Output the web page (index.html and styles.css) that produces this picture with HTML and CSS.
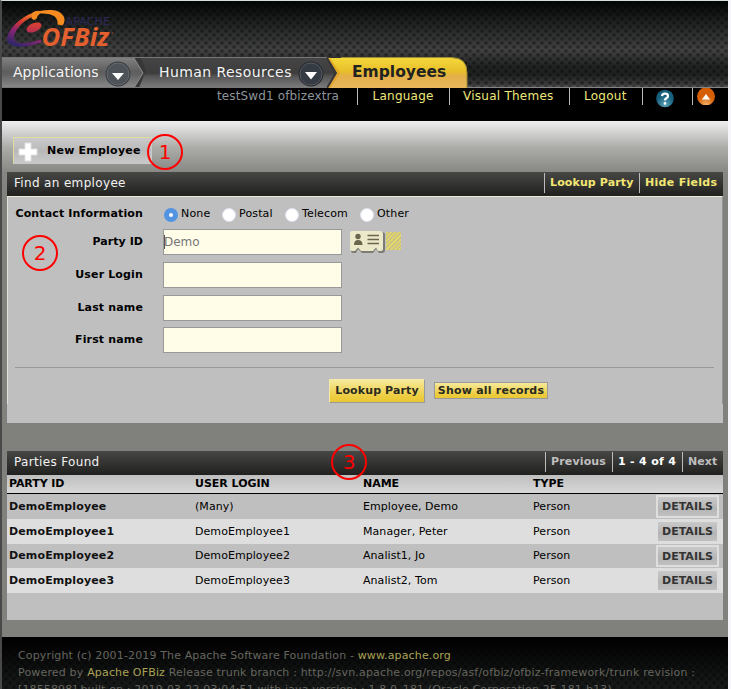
FILE: index.html
```html
<!DOCTYPE html>
<html lang="en">
<head>
<meta charset="utf-8">
<title>Employees</title>
<link rel="stylesheet" href="styles.css">
</head>
<body>
<div class="page">
  <header class="masthead">
    <svg class="logo" width="112" height="44" viewBox="0 0 112 44">
      <defs>
        <linearGradient id="swoosh" gradientUnits="userSpaceOnUse" x1="26" y1="6" x2="12" y2="38">
          <stop offset="0" stop-color="#ef7a25"/><stop offset=".3" stop-color="#d5382f"/><stop offset=".6" stop-color="#8a2573"/><stop offset="1" stop-color="#2b2766"/>
        </linearGradient>
        <linearGradient id="seed" x1="1" y1="0" x2="0" y2="1"><stop offset="0" stop-color="#e8472a"/><stop offset="1" stop-color="#a92a58"/></linearGradient>
      </defs>
      <path d="M27 4C16 7 1 20 1 31C2 39 18 40 35 33.500V30.500C22 35 9 36 8 29C8 21 17 12 26 8Z" fill="url(#swoosh)"/>
      <path d="M26 4Q30 1 34 2Q40 .5 46 1C56 2 60 8 58 14L56.500 16.500L51.500 15.500C52.500 8 47 4 34 4.500L31.500 7Q31 10.500 28 11L25.500 9.500Z" fill="#f38b20"/>
      <ellipse cx="28" cy="18.500" rx="8" ry="4.300" transform="rotate(-24 28 18.500)" fill="url(#seed)"/>
      <text class="logo-top" x="59.500" y="16" textLength="44.500">APACHE</text>
      <text class="logo-name" x="35.500" y="36.500" textLength="67.500" lengthAdjust="spacingAndGlyphs">OFBiz</text>
      <circle cx="106.500" cy="24" r=".7" fill="#a04020"/>
    </svg>
    <nav class="tabs">
      <svg class="tab-shapes" width="466" height="31" viewBox="0 0 466 31">
        <defs>
          <linearGradient id="g1" x2="0" y2="1"><stop offset="0" stop-color="#808080"/><stop offset=".45" stop-color="#5e5e5e"/><stop offset=".55" stop-color="#626262"/><stop offset="1" stop-color="#8a8a8a"/></linearGradient>
          <linearGradient id="g2" x2="0" y2="1"><stop offset="0" stop-color="#454545"/><stop offset=".5" stop-color="#3d3d3d"/><stop offset=".62" stop-color="#565656"/><stop offset="1" stop-color="#7c7c7c"/></linearGradient>
          <linearGradient id="g3" x2="0" y2="1"><stop offset="0" stop-color="#f4d83a"/><stop offset=".45" stop-color="#e8be2b"/><stop offset=".6" stop-color="#e2af48"/><stop offset="1" stop-color="#e9b85d"/></linearGradient>
        </defs>
        <path d="M321 1H450Q465 1 465 16V31H321Z" fill="url(#g3)"/>
        <path d="M327 31L337 16L327 1" fill="none" stroke="#dd971c" stroke-width="2" opacity=".6"/>
        <path d="M339 .5H450Q465 .5 465 16V31" fill="none" stroke="#9d8a31"/>
        <path d="M130 1H325L334 16L325 31H130Z" fill="url(#g2)"/>
        <path d="M325 1L334 16L325 31" fill="none" stroke="#343434" stroke-width="2"/>
        <path d="M132 1L139 1L144 13L137 31H130Z" fill="#373737"/>
        <path d="M0 1H132L141 16L132 31H0Z" fill="url(#g1)"/>
        <path d="M132 1L141 16L132 31" fill="none" stroke="#8a8a8a"/>
        <path d="M0 .5H325M0 30.500H325" stroke="#777"/>
      </svg>
      <span class="tab tab-app">Applications</span>
      <svg class="drop" width="26" height="28" viewBox="0 0 26 28"><circle cx="13" cy="15" r="12.500" fill="#3a3d42"/><circle cx="13" cy="15" r="11" fill="#4d5359" stroke="#666b70"/><path d="M7 14H19L13 21Z" fill="#fff"/></svg>
      <span class="tab tab-hr">Human Resources</span>
      <svg class="drop" width="26" height="28" viewBox="0 0 26 28"><circle cx="13" cy="15" r="12.500" fill="#282c31"/><circle cx="13" cy="15" r="11" fill="#353b42" stroke="#575b60"/><path d="M7 13H19L13 20.500Z" fill="#fff"/></svg>
      <span class="tab tab-current">Employees</span>
    </nav>
  </header>
  <div class="prefs">
    <span class="pref user">testSwd1 ofbizextra</span>
    <a class="pref lang">Language</a>
    <a class="pref themes">Visual Themes</a>
    <a class="pref logout">Logout</a>
    <a class="pref help"><svg width="18" height="19" viewBox="0 0 18 19"><defs><radialGradient id="hg" cy=".85"><stop offset="0" stop-color="#5fa3b8"/><stop offset="1" stop-color="#17617f"/></radialGradient></defs><circle cx="9" cy="9.500" r="8.800" fill="url(#hg)"/><path d="M6 7.200Q6.200 4.700 9 4.700Q12 4.700 12 7Q12 8.500 10.200 9.300Q9 9.900 9 11.500" fill="none" stroke="#fff" stroke-width="2.200"/><circle cx="9" cy="14.400" r="1.300" fill="#fff"/></svg></a>
    <a class="pref up"><svg width="18" height="17" viewBox="0 0 18 17"><defs><radialGradient id="ug" cy=".95"><stop offset="0" stop-color="#f3b26b"/><stop offset="1" stop-color="#d65f06"/></radialGradient></defs><circle cx="9" cy="8.500" r="9" fill="url(#ug)"/><path d="M5 11.500L9 6L13 11.500Z" fill="#fff"/></svg></a>
  </div>
  <main class="content">
    <div class="actions">
      <a class="new-button"><svg width="20" height="20" viewBox="0 0 20 20"><path d="M7 1H13V7H19V13H13V19H7V13H1V7H7Z" fill="#fff" stroke="#e2e2e2"/></svg><span>New Employee</span></a>
    </div>
    <section class="panel find">
      <div class="bar"><h2>Find an employee</h2><div class="bar-links"><a class="w-lookup">Lookup Party</a><a class="w-hide">Hide Fields</a></div></div>
      <form class="fields">
        <div class="row first"><span class="label">Contact Information</span>
          <div class="radios">
            <span class="radio-item r1"><i class="radio on"></i>None</span>
            <span class="radio-item r2"><i class="radio"></i>Postal</span>
            <span class="radio-item r3"><i class="radio"></i>Telecom</span>
            <span class="radio-item"><i class="radio"></i>Other</span>
          </div>
        </div>
        <div class="row r-party"><span class="label">Party ID</span><div class="input">Demo</div>
          <svg class="card-icon" width="38" height="26" viewBox="0 0 38 26"><path d="M4 3H33Q36 3 36 6V21Q36 24 33 24H30L27 20L24 24H13L9 20L7 24H4Q2 24 2 21V6Q2 3 4 3Z" fill="#6d6c62" opacity=".8"/><path d="M3 2H31Q34 2 34 5V20Q34 22 32 22H29L27 18.500L24 22H12L9 18.500L6 22H3Q1 22 1 20V4Q1 2 3 2Z" fill="#ece9ca"/><circle cx="9" cy="7.500" r="2.700" fill="#69664d"/><path d="M5 16Q5 11 9 11Q13.500 11 13.500 16Z" fill="#69664d"/><path d="M18.500 6.500H30M18.500 10.500H30M18.500 14.500H30" stroke="#69664d" stroke-width="1.400"/></svg>
          <i class="hatch"></i></div>
        <div class="row"><span class="label">User Login</span><div class="input"></div></div>
        <div class="row"><span class="label">Last name</span><div class="input"></div></div>
        <div class="row"><span class="label">First name</span><div class="input"></div></div>
        <div class="submit"><span class="btn lookup">Lookup Party</span><span class="btn show">Show all records</span></div>
      </form>
    </section>
    <section class="panel results">
      <div class="bar"><h2>Parties Found</h2><div class="bar-links pager"><span class="w-prev">Previous</span><b class="w-count">1 - 4 of 4</b><span class="w-next">Next</span></div></div>
      <div class="tr head"><span>PARTY ID</span><span>USER LOGIN</span><span>NAME</span><span>TYPE</span></div>
      <div class="tr"><b>DemoEmployee</b><span>(Many)</span><span>Employee, Demo</span><span>Person</span><a class="details">DETAILS</a></div>
      <div class="tr alt"><b>DemoEmployee1</b><span>DemoEmployee1</span><span>Manager, Peter</span><span>Person</span><a class="details">DETAILS</a></div>
      <div class="tr short"><b>DemoEmployee2</b><span>DemoEmployee2</span><span>Analist1, Jo</span><span>Person</span><a class="details">DETAILS</a></div>
      <div class="tr alt"><b>DemoEmployee3</b><span>DemoEmployee3</span><span>Analist2, Tom</span><span>Person</span><a class="details">DETAILS</a></div>
    </section>
  </main>
  <footer class="footer">
    <div class="f1">Copyright (c) 2001-2019 The Apache Software Foundation - <a>www.apache.org</a></div>
    <div class="f2">Powered by <a>Apache OFBiz</a> Release trunk branch : http://svn.apache.org/repos/asf/ofbiz/ofbiz-framework/trunk revision :</div>
    <div class="f3">[1855898] built on : 2019-03-22 03:04:51 with java version: : 1.8.0_181 (Oracle Corporation 25.181-b13)</div>
  </footer>
  <span class="mark m1">1</span>
  <span class="mark m2">2</span>
  <span class="mark m3">3</span>
</div>
</body>
</html>
```
FILE: styles.css
```css
* { box-sizing: border-box; }
body { margin: 0; background: #f7f6fa; font: 11px/14px "DejaVu Sans", sans-serif; color: #000; overflow: hidden; }
.page { position: relative; width: 728px; height: 689px; border-left: 2px solid #494949; border-top: 1px solid #d4dedf; overflow: hidden; }

.masthead { height: 87px; display: flex; flex-direction: column; justify-content: space-between; border-bottom: 1px solid #858585;
  background:
    radial-gradient(circle at 4px 2px, rgba(0,0,0,.36) 1px, transparent 2.600px) 0 0 / 8px 8px,
    radial-gradient(circle at 4px 2px, rgba(0,0,0,.36) 1px, transparent 2.600px) 4px 4px / 8px 8px,
    linear-gradient(#030505, #272929 32%, #414141 57%, #1f2121 77%, #1f2121 86%, #3a3a3a 97%, #555); }
.logo { margin: 8px 0 0 4px; flex: none; }
.logo-top { font: 11px "DejaVu Sans", sans-serif; fill: #2b2858; }
.logo-name { font: italic bold 25px "Open Sans", sans-serif; fill: #e4602e; }
.tabs { position: relative; display: flex; align-items: center; height: 31px; width: 466px; margin-bottom: -1px; flex: none; }
.tab-shapes { position: absolute; left: 0; top: 0; }
.tab { position: relative; margin-top: -1px; font-size: 14px; line-height: 20px; color: #f4f4f4; white-space: nowrap; }
.tab-app { margin-left: 11px; width: 92px; }
.tab-hr { margin-left: 28px; width: 139px; letter-spacing: .43px; }
.tab-current { margin-left: 28px; font-size: 15.500px; font-weight: bold; color: #222; }
.drop { position: relative; flex: none; }

.prefs { display: flex; height: 33px; background: #000; color: #8d959a; font-size: 12px; line-height: 16px; }
.pref { height: 17px; white-space: nowrap; letter-spacing: .25px; }
.pref + .pref { border-left: 1px solid #b9b9b9; color: #eee77b; }
.user { margin-left: 215px; width: 140px; letter-spacing: .13px; }
.lang { width: 92px; padding-left: 14.500px; }
.themes { width: 120px; padding-left: 13px; }
.logout { width: 73px; padding-left: 14px; }
.help { width: 50px; padding: 1px 0 0 13px; }
.up { padding-left: 4px; }
.pref svg { display: block; }

.content { height: 516px; padding: 16px 5px 0; background: linear-gradient(#efeff0, #adadaa 26px, #868683 52px, #80807d 80px, #80807d); }
.actions { height: 35px; padding-left: 6px; }
.new-button { display: flex; width: 139px; height: 27px; padding: 4px 4px 0; gap: 9px; border: 1px solid #e2dc9e; border-right-color: #ccc; border-bottom-color: #c8c8c8; background: linear-gradient(#cacaca, #b9b9b9 50%, #c8c8c8); font-weight: bold; letter-spacing: .23px; white-space: nowrap; }
.new-button svg { flex: none; }
.new-button span { margin-top: 2px; line-height: 14px; }

.panel { background: #bfbfbf; }
.find { height: 251px; margin-bottom: 28px; }
.bar { height: 24px; display: flex; justify-content: space-between; padding: 0 6px 0 7px; background: linear-gradient(#474745, #20201f); color: #f2f2f2; }
.bar h2 { margin: 0; font-size: 12px; font-weight: normal; line-height: 22px; letter-spacing: .34px; }
.bar-links { display: flex; height: 20px; margin-top: 1px; font-weight: bold; line-height: 19px; color: #f2e773; letter-spacing: .3px; white-space: nowrap; }
.bar-links > * { border-left: 1px solid #bbb; padding-left: 5px; }
.w-lookup { width: 95px; letter-spacing: .12px; }
.w-hide { width: 78px; }
.pager { color: #bfbfbf; }
.w-prev { width: 67px; letter-spacing: .15px; }
.w-count { width: 70px; color: #fff; }
.w-next { width: 35px; letter-spacing: .1px; }

.fields { height: 208px; border-top: 1px solid #eee9d9; border-left: 1px solid #e0e0dc; border-right: 1px solid #949494; }
.results { height: 169px; }
.row { display: flex; height: 32.500px; align-items: flex-start; }
.first { height: 32px; padding-top: 11px; }
.label { width: 135px; margin-right: 20px; line-height: 26px; text-align: right; font-weight: bold; letter-spacing: .15px; white-space: nowrap; }
.first .label { line-height: 14px; margin-top: -1px; }
.input { width: 179px; height: 26px; border: 1px solid #999; background: #fffce8; color: #777; font-size: 12px; line-height: 24px; }
.r-party { height: 33px; }
.r-party .label { line-height: 25px; letter-spacing: .05px; }
.r-party .input { position: relative; }
.r-party .input::before { content: ""; position: absolute; left: 0; top: 5px; width: 1px; height: 14px; background: #555; }
.card-icon { margin-left: 7px; }
.hatch { width: 15px; height: 18px; margin: 3px 0 0 -1px; background: repeating-linear-gradient(135deg, #e3d66d 0 1.500px, #c9c184 1.500px 3px); }
.radios { display: flex; padding-left: 1px; margin-top: -1px; letter-spacing: .15px; }
.radio-item { display: flex; gap: 3px; height: 14px; }
.r1 { width: 58px; } .r2 { width: 63px; } .r3 { width: 75px; }
.radio { width: 14px; height: 14px; margin-top: 1px; border-radius: 50%; background: #fff; border: 1px solid #dfe3f2; flex: none; }
.radio.on { border: 5px solid #5294e2; }
.submit { display: flex; align-items: center; margin: 7px 8px 0 7px; height: 46px; border-top: 1px solid #999; padding-left: 314px; gap: 9px; }
.btn { font-weight: bold; color: #2a2a20; text-align: center; white-space: nowrap; background: linear-gradient(#f6ea9c, #edcc3f 75%, #e9c735); }
.lookup { width: 96px; height: 24px; margin-top: 1px; line-height: 22px; border: 1px solid #f6e9a5; border-right-color: #999; border-bottom-color: #999; letter-spacing: .12px; }
.show { width: 114px; height: 17px; line-height: 15px; border: 1px solid #999; letter-spacing: .22px; }

.tr { display: grid; grid-template-columns: 186px 168px 170px 122px 63px; align-items: center; height: 25px; padding-left: 2px; letter-spacing: .06px; }
.tr b { color: #111; letter-spacing: .13px; }
.head { height: 19px; border-bottom: 1px solid #000; background: linear-gradient(#bebebe, #d8d8d8); font-weight: bold; letter-spacing: -.02px; }
.head span { margin-top: -1px; }
.head span:first-child { letter-spacing: -.1px; }
.details { height: 23px; margin-left: 2px; width: 63px; border: 2px solid #dedede; background: linear-gradient(#c9c9c9, #b5b5b5 60%, #c0c0c0); font-weight: bold; color: #333; text-align: center; line-height: 19px; letter-spacing: 0; margin-left: 1px; }
.alt { background: #dedede; }
.short { height: 24px; }
.short .details { height: 22px; }

.footer { height: 52px; padding: 10px 0 0 16px; color: #66665f; line-height: 17px; white-space: nowrap; letter-spacing: .14px;
  background:
    radial-gradient(circle at 4px 2px, rgba(0,0,0,.36) 1px, transparent 2.600px) 0 0 / 8px 8px,
    radial-gradient(circle at 4px 2px, rgba(0,0,0,.36) 1px, transparent 2.600px) 4px 4px / 8px 8px,
    linear-gradient(#000, #181a1a); }
.f2 { letter-spacing: .17px; }
.footer a { color: #aaa355; }

.mark { position: absolute; width: 36px; height: 36px; border: 2.500px solid #f00; border-radius: 50%; color: #f00; font-size: 20px; line-height: 32px; text-align: center; }
.m1 { left: 145px; top: 133px; }
.m2 { left: 20px; top: 234px; }
.m3 { left: 329px; top: 443px; }
```
